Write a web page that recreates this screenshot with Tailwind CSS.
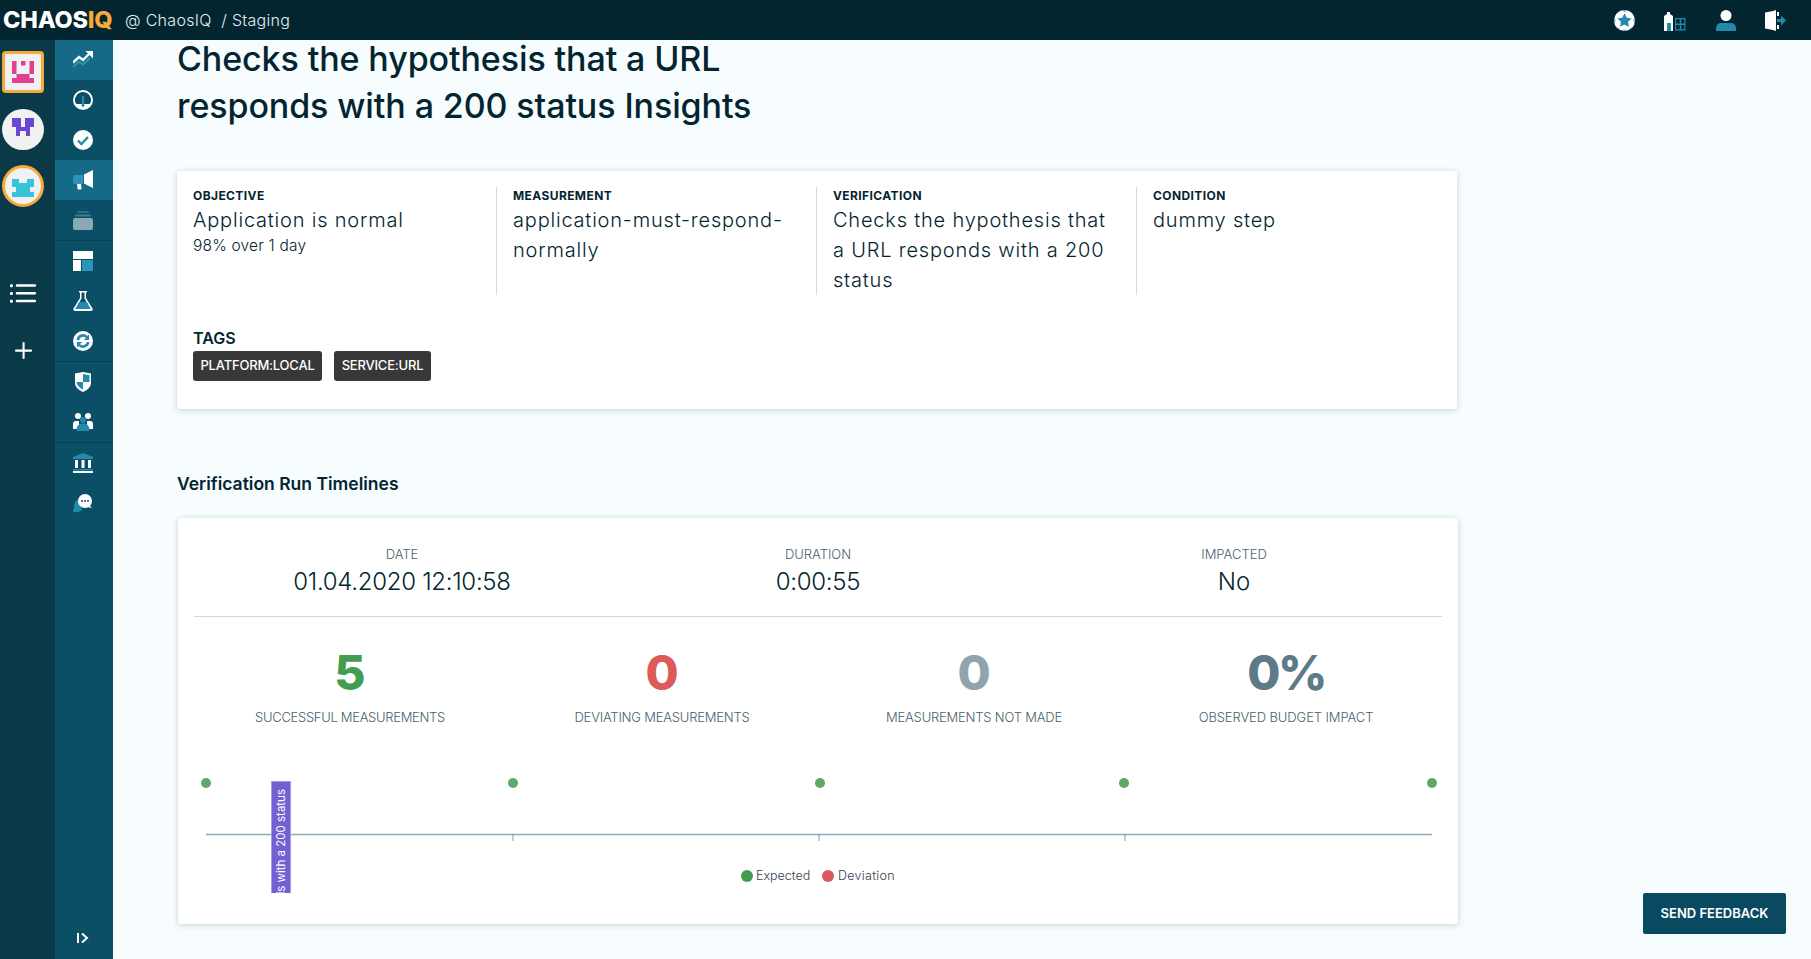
<!DOCTYPE html>
<html lang="en">
<head>
    <meta charset="UTF-8">
    <title>ChaosIQ - Insights</title>
    <script src="https://cdn.jsdelivr.net/npm/@tailwindcss/browser@4"></script>
</head>
<body class="h-screen overflow-hidden bg-[#f7fcff] text-[#03252f] font-['Inter',sans-serif] flex flex-col">
    <!-- top bar -->
    <header class="h-10 shrink-0 bg-[#03252f] flex items-center text-white">
        <div class="pl-[3px] w-[125px] text-[23.500px] leading-none font-extrabold tracking-[-0.2px]">CHAOS<span class="text-[#f9a83a]">IQ</span></div>
        <div class="text-[16px] font-light text-[#e4eef1] tracking-[0.3px]">@ ChaosIQ &nbsp;/ Staging</div>
        <div class="ml-auto flex items-center gap-[29.500px] pr-[25px]">
            <svg class="w-[21px] h-[21px]" viewBox="0 0 20 20"><circle cx="10" cy="10" r="10" fill="#fff"/><path d="M10 3l2.100 4.300 4.700.7-3.400 3.300.8 4.700-4.200-2.200-4.200 2.200.8-4.700L3.200 8l4.700-.7z" fill="#2589ab"/><path d="M8 .4h4l-2 1.400zM.5 7.500l1 2.500-1 2.500zM19.500 7.500l-1 2.500 1 2.500zM3.500 16.500l2.500 2.300-2.500-.8zM16.500 16.500L14 18.800l2.500-.8zM8 18.800h4l-2 .9z" fill="#2589ab"/></svg>
            <svg class="w-[22px] h-[21px]" viewBox="0 0 22 21"><path d="M0 6l3-2V2h3v2l3 2v15H0z" fill="#fff"/><rect x="3" y="13" width="4" height="8" fill="#2589ab"/><path d="M11 8h10.500v12.500H11zM12.200 9.200v4.400h3.600V9.200zm5 0v4.400h3.100V9.200zm-5 5.800v4.300h3.600V15zm5 0v4.300h3.100V15z" fill="#2589ab" fill-rule="evenodd"/></svg>
            <svg class="w-[20px] h-[21px]" viewBox="0 0 20 21"><circle cx="10" cy="5.500" r="5.500" fill="#fff"/><path d="M0 21v-3a5 5 0 0 1 5-5h10a5 5 0 0 1 5 5v3z" fill="#2589ab"/></svg>
            <svg class="w-[21px] h-[21px]" viewBox="0 0 21 21"><path d="M0 2.500L8 1l3-1v21l-3-1-8-1.500z" fill="#fff"/><path d="M12 2h2v4h-2zM12 15h2v4h-2z" fill="#fff"/><path d="M12 9h4V5.500l5 5-5 5V12h-4z" fill="#2589ab"/></svg>
        </div>
    </header>

    <div class="flex flex-1 min-h-0">
        <!-- project rail -->
        <aside class="w-[55px] shrink-0 bg-[#0a3a48] flex flex-col items-start pl-[2px] pt-[11px]">
            <div class="w-[42px] h-[42px] rounded-[4px] border-[3px] border-[#f9a83a] bg-[#f1f1f1] flex items-center justify-center">
                <svg class="w-[22px] h-[22px]" viewBox="0 0 22 22" fill="#e0408f"><rect x="0" y="0" width="4.500" height="13"/><rect x="17.500" y="0" width="4.500" height="13"/><rect x="9" y="0" width="4.500" height="4.500"/><path d="M4.500 13h13v4H22v5H0v-5h4.500z"/></svg>
            </div>
            <div class="mt-[16px] w-[42px] h-[41px] rounded-full bg-[#f1f1f1] flex items-center justify-center">
                <svg class="mb-[5px] w-[22px] h-[18px]" viewBox="0 0 22 18" fill="#6a45d6"><path d="M0 0h9v9h4V0h9v9h-4v9h-4v-5H8v5H4V9H0z"/></svg>
            </div>
            <div class="mt-[15px] w-[42px] h-[42px] rounded-full border-[3px] border-[#f9a83a] bg-[#f1f1f1] flex items-center justify-center">
                <svg class="mt-[4px] w-[22px] h-[18px]" viewBox="0 0 22 18" fill="#36c4dc"><path d="M0 0h7v4h8V0h7v8h-4v5h4v5H0v-5h4V8H0z"/></svg>
            </div>
            <svg class="ml-[8px] mt-[76px] w-[26px] h-[20px]" viewBox="0 0 27 20" fill="#fff"><rect x="0" y="1" width="3" height="3" rx="1"/><rect x="0" y="9" width="3" height="3" rx="1"/><rect x="0" y="17" width="3" height="3" rx="1"/><rect x="6" y="1" width="21" height="2.500" rx="1"/><rect x="6" y="9" width="21" height="2.500" rx="1"/><rect x="6" y="17" width="21" height="2.500" rx="1"/></svg>
            <svg class="ml-[13px] mt-[39px] w-[17px] h-[17px]" viewBox="0 0 18 18" fill="#fff"><rect x="8" y="0" width="2.200" height="18" rx="1"/><rect x="0" y="8" width="18" height="2.200" rx="1"/></svg>
        </aside>

        <!-- section rail -->
        <nav class="w-[58px] shrink-0 bg-[#0a4f65] flex flex-col">
            <a class="h-10 pl-[18px] bg-[#156b87] flex items-center">
                <svg class="w-5 h-5" viewBox="0 0 20 20"><path d="M0 17l6-5.500 4 3 7-6.500" fill="none" stroke="#2c94b5" stroke-width="2"/><path d="M0 12.500l6-5.500 4 3 6-6" fill="none" stroke="#fff" stroke-width="2.400"/><path d="M12.500 1h7.500v7.500z" fill="#fff"/></svg>
            </a>
            <a class="h-10 pl-[18px] flex items-center">
                <svg class="w-5 h-5" viewBox="0 0 20 20"><circle cx="10" cy="10" r="10" fill="#fff"/><path d="M10 2a8 8 0 0 1 7.500 10.800c-.4 1-1 1.200-2 1.200h-11c-1 0-1.600-.2-2-1.200A8 8 0 0 1 10 2z" fill="#0a4f65"/><path d="M9 6h2l.2 8.500a1.500 1.500 0 1 1-2.400 0z" fill="#2589ab"/></svg>
            </a>
            <a class="h-10 pl-[18px] flex items-center">
                <svg class="w-5 h-5" viewBox="0 0 20 20"><circle cx="10" cy="10" r="10" fill="#fff"/><path d="M5 10.500l3.500 3.500L15 7" fill="none" stroke="#2589ab" stroke-width="2.400"/></svg>
            </a>
            <a class="h-10 pl-[18px] bg-[#156b87] flex items-center">
                <svg class="w-5 h-5" viewBox="0 0 20 20"><path d="M11 4.500L20 0v18l-9-4.500z" fill="#fff"/><path d="M2 5h8v9H2a2 2 0 0 1-2-2V7a2 2 0 0 1 2-2z" fill="#2c94b5"/><path d="M0 7.500a2 2 0 0 0 0 4zM4 14h4l.5 4.500a1 1 0 0 1-1 1h-2a1 1 0 0 1-1-1z" fill="#fff"/></svg>
            </a>
            <a class="h-10 pl-[18px] flex items-center">
                <svg class="w-5 h-5" viewBox="0 0 20 20"><rect x="0" y="8" width="20" height="12" rx="2" fill="#89a9b5"/><rect x="2" y="4.500" width="16" height="2" rx="1" fill="#3f7f92"/><rect x="4" y="1" width="12" height="2" rx="1" fill="#2c6e84"/></svg>
            </a>
            <div class="border-t border-[#083d4e]"></div>
            <a class="h-10 pl-[18px] flex items-center">
                <svg class="w-5 h-5" viewBox="0 0 20 20"><rect x="0" y="0" width="20" height="8" fill="#fff"/><rect x="0" y="9" width="8" height="11" fill="#fff"/><rect x="9" y="9" width="11" height="11" fill="#2c94b5"/></svg>
            </a>
            <a class="h-10 pl-[18px] flex items-center">
                <svg class="w-5 h-5" viewBox="0 0 20 20"><path d="M6 0h8v1.500h-1v5.500l6.500 10.500c.6 1 0 2.500-1.500 2.500H2c-1.500 0-2.100-1.500-1.500-2.500L7 7V1.500H6z" fill="#fff"/><path d="M8.500 1.500h3V7.500L17.500 18h-15L8.500 7.500z" fill="#0a4f65"/><path d="M6 11h8l3.500 7h-15z" fill="#2589ab"/></svg>
            </a>
            <a class="h-10 pl-[18px] flex items-center">
                <svg class="w-5 h-5" viewBox="0 0 20 20"><circle cx="10" cy="10" r="10" fill="#fff"/><path d="M3.500 9a6.500 6.500 0 0 1 11-4l1.500-1.500V9h-5.500L13 7a4 4 0 0 0-6.800 2zM16.500 11a6.500 6.500 0 0 1-11 4L4 16.500V11h5.500L7 13a4 4 0 0 0 6.800-2z" fill="#2589ab"/></svg>
            </a>
            <div class="border-t border-[#083d4e]"></div>
            <a class="h-10 pl-[18px] flex items-center">
                <svg class="w-5 h-5" viewBox="0 0 20 20"><path d="M2 1.500L10 0l8 1.500V11c0 4-4 7.500-8 9-4-1.500-8-5-8-9z" fill="#fff"/><path d="M10 2l6.500 1.200V10H10zM10 10H3.500c.3 3.500 3.500 6.200 6.500 7.500z" fill="#2589ab"/></svg>
            </a>
            <a class="h-10 pl-[18px] flex items-center">
                <svg class="w-5 h-5" viewBox="0 0 20 20"><circle cx="5" cy="4" r="3" fill="#fff"/><circle cx="15" cy="4" r="3" fill="#fff"/><path d="M0 12a3 3 0 0 1 3-3h3v8H0zM14 9h3a3 3 0 0 1 3 3v5h-6z" fill="#fff"/><circle cx="10" cy="8" r="3" fill="#2589ab"/><path d="M4 18a5 5 0 0 1 5-6.500h2a5 5 0 0 1 5 6.500v1H4z" fill="#2589ab"/></svg>
            </a>
            <div class="border-t border-[#083d4e]"></div>
            <a class="h-10 pl-[18px] flex items-center">
                <svg class="w-5 h-5" viewBox="0 0 20 20"><path d="M10 0l10 4v2H0V4z" fill="#2589ab"/><rect x="2" y="7" width="3" height="8" fill="#fff"/><rect x="8.500" y="7" width="3" height="8" fill="#fff"/><rect x="15" y="7" width="3" height="8" fill="#fff"/><rect x="0" y="16" width="20" height="1.500" fill="#2589ab"/><rect x="0" y="18" width="20" height="2" fill="#fff"/></svg>
            </a>
            <a class="h-10 pl-[18px] flex items-center">
                <svg class="w-5 h-5" viewBox="0 0 20 20"><path d="M7 6a7 7 0 0 0-6 7c0 2-.5 4-1 6 3 .5 7 0 9-2z" fill="#2589ab"/><circle cx="12" cy="8" r="7" fill="#fff"/><path d="M16 12l3 3-5-1z" fill="#fff"/><circle cx="9" cy="8" r="1" fill="#0a4f65"/><circle cx="12" cy="8" r="1" fill="#0a4f65"/><circle cx="15" cy="8" r="1" fill="#0a4f65"/></svg>
            </a>
            <a class="mt-auto mb-[16px] pl-[22px] flex">
                <svg class="w-[12px] h-[10px]" viewBox="0 0 12 10" fill="none" stroke="#fff"><path d="M1 0v10" stroke-width="2"/><path d="M5 0.500L10 5l-5 4.500" stroke-width="2"/></svg>
            </a>
        </nav>

        <!-- main content -->
        <main class="flex-1 min-w-0 pl-[64px]">
            <div class="w-[1280px]">
                <h1 class="mt-[-5px] w-[640px] text-[34px] leading-[47px] font-medium tracking-[-0.1px]">Checks the hypothesis that a URL responds with a 200 status Insights</h1>

                <section class="mt-[42px] h-[238px] bg-white rounded-[3px] shadow-[0_1px_6px_rgba(3,37,47,0.2)] px-4 pt-4">
                    <div class="grid grid-cols-[304px_320px_320px_1fr] h-[108px]">
                        <div class="border-r border-[#d6dadb] pr-4">
                            <div class="text-[12px] leading-[18px] font-bold tracking-[0.4px]">OBJECTIVE</div>
                            <div class="text-[20px] leading-[30px] font-light tracking-[0.8px]">Application is normal</div>
                            <div class="text-[15.500px] leading-[22px] font-light tracking-[0.2px]">98% over 1 day</div>
                        </div>
                        <div class="border-r border-[#d6dadb] px-4">
                            <div class="text-[12px] leading-[18px] font-bold tracking-[0.4px]">MEASUREMENT</div>
                            <div class="text-[20px] leading-[30px] font-light tracking-[0.8px]">application-must-respond-normally</div>
                        </div>
                        <div class="border-r border-[#d6dadb] px-4">
                            <div class="text-[12px] leading-[18px] font-bold tracking-[0.4px]">VERIFICATION</div>
                            <div class="text-[20px] leading-[30px] font-light tracking-[0.8px]">Checks the hypothesis that a URL responds with a 200 status</div>
                        </div>
                        <div class="px-4">
                            <div class="text-[12px] leading-[18px] font-bold tracking-[0.4px]">CONDITION</div>
                            <div class="text-[20px] leading-[30px] font-light tracking-[0.8px]">dummy step</div>
                        </div>
                    </div>
                    <div class="mt-[33px] text-[16px] leading-[20px] font-semibold">TAGS</div>
                    <div class="mt-[3px] flex gap-3 text-[13px] font-medium text-white">
                        <span class="h-[30px] w-[129px] rounded-[3px] bg-[#383838] flex items-center justify-center tracking-[-0.2px]">PLATFORM:LOCAL</span>
                        <span class="h-[30px] w-[97px] rounded-[3px] bg-[#383838] flex items-center justify-center tracking-[-0.2px]">SERVICE:URL</span>
                    </div>
                </section>

                <h2 class="mt-[64px] text-[17.500px] leading-[22px] font-semibold">Verification Run Timelines</h2>

                <section class="ml-px -mr-px mt-[23px] h-[406px] bg-white rounded-[3px] shadow-[0_1px_6px_rgba(3,37,47,0.2)] px-4">
                    <div class="grid grid-cols-3 h-[99px] border-b border-[#d3d6d7] text-center">
                        <div class="pt-[27px]">
                            <div class="text-[13px] leading-[18px] font-light text-[#49616b]">DATE</div>
                            <div class="pt-px text-[24px] leading-[36px] font-light tracking-[-0.3px]">01.04.2020 12:10:58</div>
                        </div>
                        <div class="pt-[27px]">
                            <div class="text-[13px] leading-[18px] font-light text-[#49616b]">DURATION</div>
                            <div class="pt-px text-[24px] leading-[36px] font-light tracking-[-0.3px]">0:00:55</div>
                        </div>
                        <div class="pt-[27px]">
                            <div class="text-[13px] leading-[18px] font-light text-[#49616b]">IMPACTED</div>
                            <div class="pt-px text-[24px] leading-[36px] font-light">No</div>
                        </div>
                    </div>
                    <div class="grid grid-cols-4 text-center pt-[28px]">
                        <div>
                            <div class="text-[48px] leading-[56px] font-extrabold text-[#449c50]">5</div>
                            <div class="mt-[7px] text-[13px] leading-[18px] font-light text-[#49616b] tracking-[-0.3px]">SUCCESSFUL MEASUREMENTS</div>
                        </div>
                        <div>
                            <div class="text-[48px] leading-[56px] font-extrabold text-[#db5b5b]">0</div>
                            <div class="mt-[7px] text-[13px] leading-[18px] font-light text-[#49616b] tracking-[-0.2px]">DEVIATING MEASUREMENTS</div>
                        </div>
                        <div>
                            <div class="text-[48px] leading-[56px] font-extrabold text-[#8fa5ae]">0</div>
                            <div class="mt-[7px] text-[13px] leading-[18px] font-light text-[#49616b] tracking-[-0.2px]">MEASUREMENTS NOT MADE</div>
                        </div>
                        <div>
                            <div class="text-[48px] leading-[56px] font-extrabold text-[#5d7a86] tracking-[-2.500px]">0%</div>
                            <div class="mt-[7px] text-[13px] leading-[18px] font-light text-[#49616b] tracking-[-0.1px]">OBSERVED BUDGET IMPACT</div>
                        </div>
                    </div>
                    <!-- timeline chart -->
                    <div class="relative mt-[48px] h-[130px] -mx-4">
                        <svg class="absolute inset-0 w-full h-full" viewBox="0 0 1280 130">
                            <g fill="#5fa86a">
                                <circle cx="28" cy="9" r="5"/>
                                <circle cx="335" cy="9" r="5"/>
                                <circle cx="642" cy="9" r="5"/>
                                <circle cx="946" cy="9" r="5"/>
                                <circle cx="1254" cy="9" r="5"/>
                            </g>
                            <path d="M28 60.500H1254" stroke="#8ea9b5" stroke-width="1.500"/>
                            <path d="M335 60v7M641 60v7M947 60v7" stroke="#8a9499"/>
                        </svg>
                        <div class="absolute left-[93px] top-[7px] w-[20px] h-[112px] bg-[#7360d2] border-t border-x border-[#a79be2] overflow-hidden">
                            <div class="absolute top-[7px] left-0 w-[18px] [writing-mode:vertical-rl] rotate-180 text-[11.500px] leading-[18px] text-white whitespace-nowrap">responds with a 200 status</div>
                        </div>
                        <div class="absolute left-[563px] top-[93px] h-[18px] flex items-center text-[12.500px] font-light text-[#33414a]">
                            <span class="w-3 h-3 rounded-full bg-[#449c50]"></span>
                            <span class="ml-[3px] w-[56px]">Expected</span>
                            <span class="ml-[10px] w-3 h-3 rounded-full bg-[#db5b5b]"></span>
                            <span class="ml-[4px] tracking-[0.3px]">Deviation</span>
                        </div>
                    </div>
                </section>
            </div>
        </main>
    </div>

    <button class="absolute left-[1643px] top-[893px] w-[143px] h-[41px] rounded-[2px] bg-[#0a4a60] text-white text-[13px] font-semibold">SEND FEEDBACK</button>
</body>
</html>
